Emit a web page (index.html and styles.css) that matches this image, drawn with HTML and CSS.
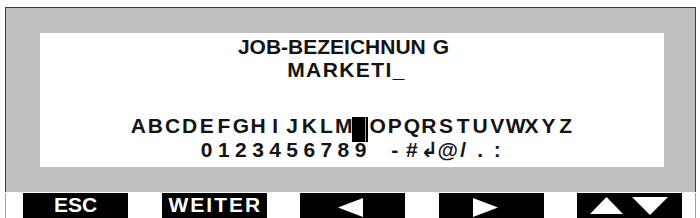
FILE: index.html
```html
<!DOCTYPE html>
<html lang="de">
<head>
  <meta charset="UTF-8">
  <title>Job-Bezeichnung</title>
  <link rel="stylesheet" href="styles.css">
</head>
<body>
  <div class="frame">
    <div class="panel">
      <div class="screen">
        <div class="title">JOB-BEZEICHNUN<span class="gap">G</span></div>
        <div class="value">MARKETI_</div>

        <div class="chars" id="letters"></div>
        <div class="chars" id="digits"></div>
      </div>
    </div>

    <div class="keys">
      <div class="key">ESC</div>
      <div class="key wide">WEITER</div>
      <div class="key arrow-left">
        <svg width="25" height="19" viewBox="0 0 25 19"><polygon points="0,9.5 25,0 25,19" fill="#fff"/></svg>
      </div>
      <div class="key arrow-right">
        <svg width="25" height="19" viewBox="0 0 25 19"><polygon points="0,0 25,9.5 0,19" fill="#fff"/></svg>
      </div>
      <div class="key arrow-updown">
        <svg width="80" height="20" viewBox="0 0 80 20">
          <polygon points="0,17 16.5,0 33,17" fill="#fff"/>
          <polygon points="42,0 78,0 60,18" fill="#fff"/>
        </svg>
      </div>
    </div>
  </div>

  <script>
    // character table, one cell per char
    const letters = "ABCDEFGHIJKLMNOPQRSTUVWXYZ";
    const digits = "0123456789 -#\u21B2@/.:";
    const cursorAt = 13; // N

    function fill(id, text, cur) {
      const row = document.getElementById(id);
      [...text].forEach((ch, i) => {
        const cell = document.createElement("span");
        cell.className = i === cur ? "cell cur" : "cell";
        cell.textContent = ch;
        row.appendChild(cell);
      });
    }

    fill("letters", letters, cursorAt);
    fill("digits", digits, -1);
  </script>
</body>
</html>
```

FILE: styles.css
```css
* {
  box-sizing: border-box;
}

body {
  margin: 0;
  width: 700px;
  height: 218px;
  overflow: hidden;
  background: #fff;
  font-family: "Liberation Sans", Arial, "DejaVu Sans", sans-serif;
  font-weight: bold;
}

.frame {
  width: 691px;
  margin: 7px 0 0 5px;
}

.panel {
  background: #c0c0c0;
  border: 1px solid #3a3a3a;
  border-bottom: none;
  padding: 25px 31px 25px 34px;
}

.screen {
  background: #fff;
  height: 134px;
  padding-top: 2px;
  color: #141414;
  text-align: center;
}

.title {
  font-size: 21px;
  line-height: 23px;
  padding-right: 17px;
}

.title .gap {
  margin-left: 7px;
}

.value {
  font-size: 21px;
  line-height: 23px;
  letter-spacing: 1.4px;
  padding-right: 11px;
}

.chars {
  display: flex;
  justify-content: center;
  font-size: 21px;
  line-height: 24px;
}

#letters {
  margin-top: 33px;
}

.cell {
  width: 17.1px;
  text-align: center;
}

.cell.cur {
  position: relative;
}

/* block cursor over the selected letter */
.cell.cur::after {
  content: "";
  position: absolute;
  left: 0;
  top: 3px;
  width: 16px;
  height: 25px;
  background: linear-gradient(to right, #000 0, #000 13px, #9a9a9a 13px, #9a9a9a 14.5px, #000 14.5px);
}

.keys {
  display: flex;
  gap: 33.5px;
  height: 30px;
  margin-top: 1px;
  padding-left: 17px;
  border-left: 1px solid #a0a0a0;
  border-right: 1px solid #a0a0a0;
}

.key {
  width: 105px;
  height: 30px;
  background: #000;
  color: #fff;
  font-size: 21px;
  line-height: 21px;
  padding-top: 1px;
  display: flex;
  justify-content: center;
  overflow: hidden;
}

.key.wide {
  justify-content: flex-start;
  padding-left: 7px;
  letter-spacing: 2px;
}

.arrow-left,
.arrow-right,
.arrow-updown {
  justify-content: flex-start;
  padding-top: 5px;
}

.arrow-left {
  padding-left: 38px;
}

.arrow-right {
  padding-left: 34px;
}

.arrow-updown {
  padding-top: 4px;
  padding-left: 13px;
}
```
